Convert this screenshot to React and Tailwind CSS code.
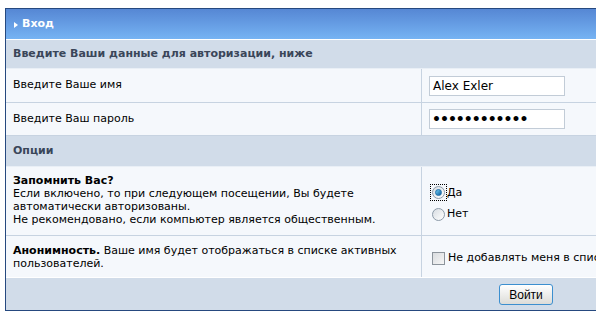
import React from 'react';

const font = { fontFamily: '"DejaVu Sans", Verdana, sans-serif' };

const Radio = ({ checked, focused }) => (
  <span className={`inline-flex items-center justify-center w-[15px] h-[15px] ${focused ? 'outline outline-1 outline-dotted outline-black' : ''}`}>
    <span className="w-[13px] h-[13px] rounded-full border border-[#8c9aa8] bg-gradient-to-br from-[#d8dde2] to-[#ffffff] flex items-center justify-center">
      {checked && <span className="w-[7px] h-[7px] rounded-full bg-gradient-to-br from-[#6fd0f5] to-[#0a5c9c] border border-[#1d6ea8]" />}
    </span>
  </span>
);

const App = () => {
  return (
    <div className="w-[596px] h-[319px] overflow-hidden bg-white text-[11px] text-black" style={font}>
      <div className="mt-[8px] ml-[5px] w-[700px] border border-[#26497f] flex flex-col">
        {/* header */}
        <div className="h-[31px] bg-gradient-to-b from-[#5687d4] to-[#76b3f3] flex items-center pl-[8px] text-white font-bold border-b border-white">
          <span className="w-0 h-0 border-y-[3px] border-y-transparent border-l-[4px] border-l-white mr-[4px] mt-[1px]" />
          <span>Вход</span>
        </div>
        <div className="h-[29px] bg-[#d1dce9] flex items-center px-[7px] font-bold text-[#3a4659] border-b border-[#e9eff6]">
          Введите Ваши данные для авторизации, ниже
        </div>
        {/* name */}
        <div className="flex h-[34px] bg-[#f5f8fc] border-b border-[#c7d3e1]">
          <div className="w-[416px] flex items-center px-[7px] border-r border-[#c7d3e1]">Введите Ваше имя</div>
          <div className="flex-1 flex items-center px-[7px]">
            <div className="w-[136px] h-[20px] bg-white border border-[#c2ccd7] flex items-center px-[3px] text-[12px]">Alex Exler</div>
          </div>
        </div>
        {/* password */}
        <div className="flex h-[33px] bg-[#f5f8fc] border-b border-[#c7d3e1]">
          <div className="w-[416px] flex items-center px-[7px] border-r border-[#c7d3e1]">Введите Ваш пароль</div>
          <div className="flex-1 flex items-center px-[7px]">
            <div className="w-[136px] h-[20px] bg-white border border-[#c2ccd7] flex items-center px-[2px] text-[14px] tracking-[-1px] font-bold">••••••••••••</div>
          </div>
        </div>
        <div className="h-[31px] bg-[#d1dce9] flex items-center px-[7px] font-bold text-[#3a4659] border-b border-[#e9eff6]">
          Опции
        </div>
        {/* remember */}
        <div className="flex h-[69px] bg-[#f5f8fc] border-b border-[#c7d3e1]">
          <div className="w-[416px] px-[7px] pt-[7px] leading-[13px] border-r border-[#c7d3e1]">
            <div className="font-bold">Запомнить Вас?</div>
            <div>Если включено, то при следующем посещении, Вы будете автоматически авторизованы.</div>
            <div>Не рекомендовано, если компьютер является общественным.</div>
          </div>
          <div className="flex-1 flex flex-col justify-center px-[9px] pt-[5px] gap-[5px]">
            <label className="flex items-center">
              <Radio checked focused />
              <span className="ml-[1px]">Да</span>
            </label>
            <label className="flex items-center">
              <Radio />
              <span className="ml-[1px]">Нет</span>
            </label>
          </div>
        </div>
        {/* anonymous */}
        <div className="flex h-[42px] bg-[#f5f8fc] border-b border-white">
          <div className="w-[416px] flex items-center px-[7px] leading-[13px] border-r border-[#c7d3e1]">
            <div><span className="font-bold">Анонимность.</span> Ваше имя будет отображаться в списке активных пользователей.</div>
          </div>
          <div className="flex-1 flex items-center px-[10px] pt-[3px]">
            <span className="w-[13px] h-[13px] border border-[#8c949c] bg-gradient-to-br from-[#d9dcdf] to-[#f6f6f6] mr-[3px]" />
            <span className="whitespace-nowrap">Не добавлять меня в список</span>
          </div>
        </div>
        {/* footer */}
        <div className="h-[32px] bg-[#d1dce9] flex items-center pl-[493px] pt-[1px]">
          <button className="w-[54px] h-[21px] rounded-[3px] border border-[#3c8fcf] bg-gradient-to-b from-[#ffffff] to-[#dcdcd8] text-[12px] text-black flex items-center justify-center" style={{ fontFamily: '"Liberation Sans", Arial, sans-serif' }}>
            Войти
          </button>
        </div>
      </div>
    </div>
  );
};

export default App;
